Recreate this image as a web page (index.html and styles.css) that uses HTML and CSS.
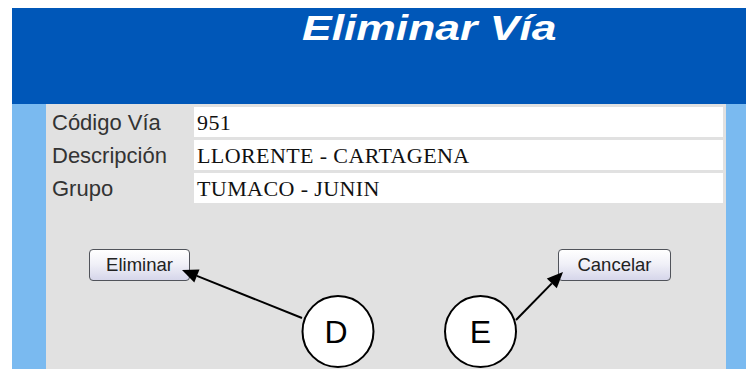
FILE: index.html
```html
<!DOCTYPE html>
<html lang="es">
<head>
    <meta charset="UTF-8">
    <meta name="viewport" content="width=device-width, initial-scale=1.0">
    <title>Eliminar Vía</title>
    <link rel="stylesheet" href="styles.css">
</head>
<body>

<div class="header">
    <h1 class="title">Eliminar Vía</h1>
</div>

<div class="main">
    <div class="panel">
        <!-- Datos de la vía a eliminar -->
        <div class="fields">
            <div class="label">Código Vía</div>
            <div class="value">951</div>

            <div class="label">Descripción</div>
            <div class="value">LLORENTE - CARTAGENA</div>

            <div class="label">Grupo</div>
            <div class="value">TUMACO - JUNIN</div>
        </div>

        <div class="actions">
            <button type="button" class="btn btn-eliminar">Eliminar</button>
            <button type="button" class="btn btn-cancelar">Cancelar</button>
        </div>
    </div>
</div>

<!-- Anotaciones sobre la captura -->
<svg class="notes" width="746" height="369" viewBox="0 0 746 369">
    <line x1="302" y1="318" x2="196.9" y2="275.9" stroke="#000" stroke-width="2"/>
    <polygon points="182,270 194.3,282.4 199.5,269.4" fill="#000"/>
    <circle cx="338" cy="331.5" r="35.5" fill="#fff" stroke="#000" stroke-width="2"/>
    <text x="336" y="343" class="note-letter" text-anchor="middle">D</text>

    <line x1="516" y1="320" x2="551.8" y2="283.4" stroke="#000" stroke-width="2"/>
    <polygon points="563,272 556.8,288.3 546.8,278.5" fill="#000"/>
    <circle cx="480.5" cy="331.5" r="35.5" fill="#fff" stroke="#000" stroke-width="2"/>
    <text x="480.5" y="343" class="note-letter" text-anchor="middle">E</text>
</svg>

</body>
</html>
```

FILE: styles.css
```css
body {
    margin: 8px 0 0 12px;
    font-family: 'Liberation Sans', Arial, sans-serif;
    background-color: #fff;
    color: #1c1c1c;
    overflow: hidden;
}

.header {
    height: 96px;
    background-color: #0057b8;
}
.title {
    display: inline-block;
    margin: 1px 0 0 290px;
    font-size: 35px;
    line-height: 38px;
    font-weight: bold;
    font-style: italic;
    color: #fff;
    transform: scaleX(1.27);
    transform-origin: left top;
}

.main {
    display: flex;
    height: 265px;
    background-color: #7abaf0;
}
.panel {
    flex: 1;
    margin: 0 20px 0 34px;
    padding: 3px 3px 0 0;
    background-color: #e1e1e1;
}

/* Tabla de datos en dos columnas */
.fields {
    display: grid;
    grid-template-columns: 148px 1fr;
    row-gap: 3px;
}
.label {
    height: 30px;
    padding: 1px 0 0 6px;
    box-sizing: border-box;
    font-size: 22px;
    line-height: 30px;
    color: #333;
}
.value {
    height: 30px;
    padding: 1px 0 0 3px;
    box-sizing: border-box;
    background-color: #fff;
    font-family: 'Liberation Serif', 'Times New Roman', serif;
    font-size: 22px;
    line-height: 30px;
    letter-spacing: 0.4px;
    color: #111;
}

.actions {
    display: flex;
    justify-content: space-between;
    margin-top: 46px;
    padding: 0 52px 0 43px;
}
.btn {
    height: 32px;
    padding: 0;
    border: 1px solid #50535a;
    border-radius: 4px;
    background: linear-gradient(#ffffff, #f1f1f8 45%, #d6d6ea);
    font-family: 'Liberation Sans', Arial, sans-serif;
    font-size: 18.5px;
    color: #222;
    cursor: pointer;
}
.btn-eliminar {
    width: 101px;
}
.btn-cancelar {
    width: 113px;
}

.notes {
    position: absolute;
    top: 0;
    left: 0;
    pointer-events: none;
}
.note-letter {
    font-family: 'Liberation Sans', Arial, sans-serif;
    font-size: 32px;
    fill: #000;
}
```
